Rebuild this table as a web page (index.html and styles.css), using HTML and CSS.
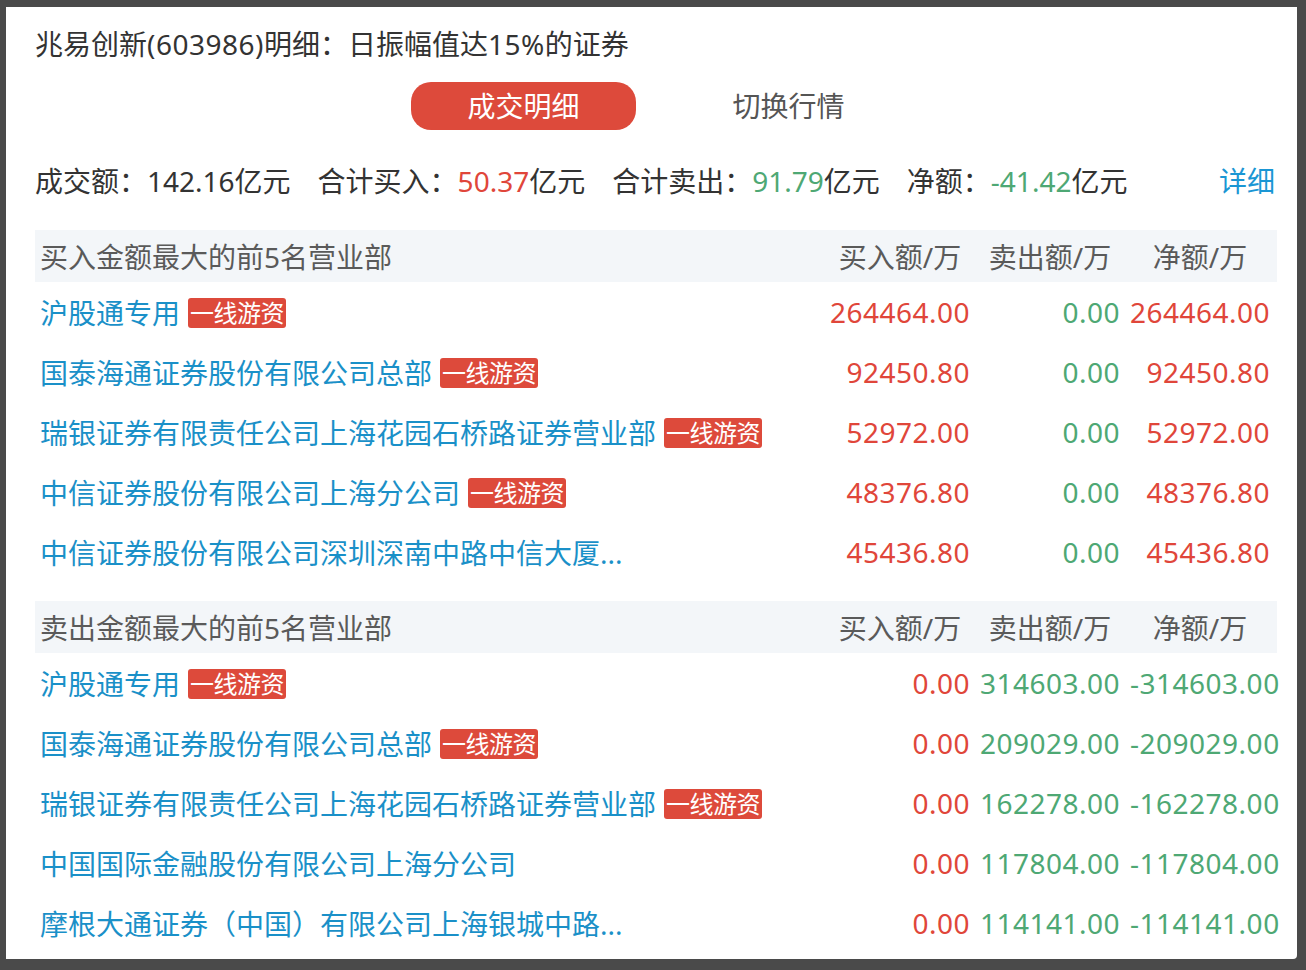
FILE: index.html
```html
<!DOCTYPE html>
<html lang="zh-CN">
<head>
<meta charset="utf-8">
<title>兆易创新(603986)明细</title>
<link rel="stylesheet" href="styles.css">
</head>
<body>
<div class="panel">
  <div class="title">兆易创新<span class="num">(603986)</span>明细：日振幅值达<span class="num">15%</span>的证券</div>
  <div class="tabs">
    <div class="tab active">成交明细</div>
    <div class="tab">切换行情</div>
  </div>
  <div class="summary">
    <span class="item">成交额：142.16亿元</span>
    <span class="item">合计买入：<span class="red">50.37</span>亿元</span>
    <span class="item">合计卖出：<span class="green">91.79</span>亿元</span>
    <span class="item">净额：<span class="green">-41.42</span>亿元</span>
    <span class="more">详细</span>
  </div>

  <div class="section">
    <div class="row head">
      <div class="name">买入金额最大的前5名营业部</div>
      <div class="col">买入额/万</div>
      <div class="col">卖出额/万</div>
      <div class="col">净额/万</div>
    </div>
    <div class="row">
      <div class="name"><span class="link">沪股通专用</span><span class="tag">一线游资</span></div>
      <div class="col red">264464.00</div>
      <div class="col green">0.00</div>
      <div class="col red">264464.00</div>
    </div>
    <div class="row">
      <div class="name"><span class="link">国泰海通证券股份有限公司总部</span><span class="tag">一线游资</span></div>
      <div class="col red">92450.80</div>
      <div class="col green">0.00</div>
      <div class="col red">92450.80</div>
    </div>
    <div class="row">
      <div class="name"><span class="link">瑞银证券有限责任公司上海花园石桥路证券营业部</span><span class="tag">一线游资</span></div>
      <div class="col red">52972.00</div>
      <div class="col green">0.00</div>
      <div class="col red">52972.00</div>
    </div>
    <div class="row">
      <div class="name"><span class="link">中信证券股份有限公司上海分公司</span><span class="tag">一线游资</span></div>
      <div class="col red">48376.80</div>
      <div class="col green">0.00</div>
      <div class="col red">48376.80</div>
    </div>
    <div class="row">
      <div class="name"><span class="link">中信证券股份有限公司深圳深南中路中信大厦...</span></div>
      <div class="col red">45436.80</div>
      <div class="col green">0.00</div>
      <div class="col red">45436.80</div>
    </div>
  </div>

  <div class="section second">
    <div class="row head">
      <div class="name">卖出金额最大的前5名营业部</div>
      <div class="col">买入额/万</div>
      <div class="col">卖出额/万</div>
      <div class="col">净额/万</div>
    </div>
    <div class="row">
      <div class="name"><span class="link">沪股通专用</span><span class="tag">一线游资</span></div>
      <div class="col red">0.00</div>
      <div class="col green">314603.00</div>
      <div class="col green">-314603.00</div>
    </div>
    <div class="row">
      <div class="name"><span class="link">国泰海通证券股份有限公司总部</span><span class="tag">一线游资</span></div>
      <div class="col red">0.00</div>
      <div class="col green">209029.00</div>
      <div class="col green">-209029.00</div>
    </div>
    <div class="row">
      <div class="name"><span class="link">瑞银证券有限责任公司上海花园石桥路证券营业部</span><span class="tag">一线游资</span></div>
      <div class="col red">0.00</div>
      <div class="col green">162278.00</div>
      <div class="col green">-162278.00</div>
    </div>
    <div class="row">
      <div class="name"><span class="link">中国国际金融股份有限公司上海分公司</span></div>
      <div class="col red">0.00</div>
      <div class="col green">117804.00</div>
      <div class="col green">-117804.00</div>
    </div>
    <div class="row">
      <div class="name"><span class="link">摩根大通证券（中国）有限公司上海银城中路...</span></div>
      <div class="col red">0.00</div>
      <div class="col green">114141.00</div>
      <div class="col green">-114141.00</div>
    </div>
  </div>
</div>
</body>
</html>
```

FILE: styles.css
```css
html, body {
  height: 100%;
}
body {
  margin: 0;
  box-sizing: border-box;
  padding: 7px 9px 11px 6px;
  background: #4a4a4a;
  font-family: "Noto Sans", "Noto Sans CJK SC", sans-serif;
  font-size: 28px;
  color: #333;
}
.panel {
  box-sizing: border-box;
  height: 100%;
  background: #fff;
  border-radius: 0 0 4px 0;
  padding: 17px 20px 0 29px;
  overflow: hidden;
}
.title {
  line-height: 40px;
  height: 40px;
  color: #333;
}
.num {
  letter-spacing: 0.5px;
}
.tabs {
  display: flex;
  justify-content: center;
  gap: 40px;
  margin-top: 18px;
}
.tab {
  width: 225px;
  height: 48px;
  line-height: 48px;
  text-align: center;
  color: #555;
  border-radius: 20px;
}
.tab.active {
  background: #dd4a3b;
  color: #fff;
}
.summary {
  display: flex;
  align-items: center;
  gap: 27px;
  margin-top: 31px;
  line-height: 40px;
  height: 40px;
  white-space: nowrap;
  padding-right: 2px;
}
.more {
  margin-left: auto;
  color: #1a96d4;
}
.red { color: #e0463a; }
.green { color: #4ea874; }
.section {
  margin-top: 29px;
}
.section.second {
  margin-top: 19px;
}
.row {
  display: flex;
  align-items: center;
  height: 60px;
  white-space: nowrap;
  padding-right: 2px;
}
.row.head {
  height: 52px;
  background: #f3f6f9;
  color: #5a5a5a;
}
.name {
  flex: 1;
  min-width: 0;
  padding-left: 5px;
  display: flex;
  align-items: center;
}
.link {
  color: #1a90c8;
}
.tag {
  margin-left: 8px;
  margin-top: 2px;
  background: #dd4a3b;
  color: #fff;
  font-size: 24px;
  line-height: 30px;
  height: 30px;
  padding: 0 2px;
  border-radius: 3px;
  letter-spacing: -0.5px;
}
.col {
  box-sizing: border-box;
  width: 150px;
  flex: none;
  padding: 0 5px;
  text-align: right;
  letter-spacing: 0.5px;
}
.row.head .col {
  text-align: center;
  padding: 0;
  letter-spacing: 0;
}
```
